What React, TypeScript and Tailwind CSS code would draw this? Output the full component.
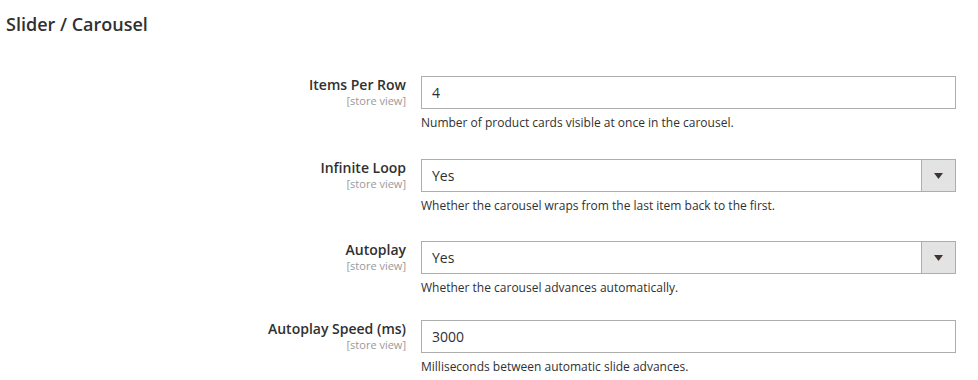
import React from "react";

interface FieldRowProps {
  label: string;
  value: string;
  note: string;
  select?: boolean;
  rowClass: string;
}

const FieldRow: React.FC<FieldRowProps> = ({ label, value, note, select, rowClass }) => {
  return (
    <div className={`flex ${rowClass}`}>
      <div className="w-[406px] shrink-0 text-right">
        <div className="text-[14px] leading-[18px] font-semibold text-[#303030]">{label}</div>
        <div className="text-[11px] leading-[13px] text-[#999999]">[store view]</div>
      </div>
      <div className="ml-[15px] w-[535px]">
        <div className="flex h-[33px] border border-[#adadad] bg-white">
          <div className="flex-1 flex items-center pl-[10px] text-[14px] text-[#303030]">{value}</div>
          {select && (
            <div className="w-[34px] flex items-center justify-center border-l border-[#adadad] bg-[#e3e3e3]">
              <svg width="9" height="6" viewBox="0 0 9 6">
                <path d="M0 0 L9 0 L4.5 6 Z" fill="#41362f" />
              </svg>
            </div>
          )}
        </div>
        <p className="mt-[6px] text-[12px] leading-[16px] text-[#303030]">{note}</p>
      </div>
    </div>
  );
};

export default function App() {
  return (
    <div className="w-[978px] h-[380px] bg-white overflow-hidden" style={{ fontFamily: '"Open Sans", sans-serif' }}>
      <h2 className="pl-[6px] pt-[13px] text-[18px] leading-[22px] font-semibold text-[#303030]">Slider / Carousel</h2>
      <div className="mt-[41px]">
        <FieldRow
          label="Items Per Row"
          value="4"
          note="Number of product cards visible at once in the carousel."
          rowClass="h-[83px]"
        />
        <FieldRow
          label="Infinite Loop"
          value="Yes"
          select
          note="Whether the carousel wraps from the last item back to the first."
          rowClass="h-[82px]"
        />
        <FieldRow
          label="Autoplay"
          value="Yes"
          select
          note="Whether the carousel advances automatically."
          rowClass="h-[79px]"
        />
        <FieldRow
          label="Autoplay Speed (ms)"
          value="3000"
          note="Milliseconds between automatic slide advances."
          rowClass="h-[60px]"
        />
      </div>
    </div>
  );
}
